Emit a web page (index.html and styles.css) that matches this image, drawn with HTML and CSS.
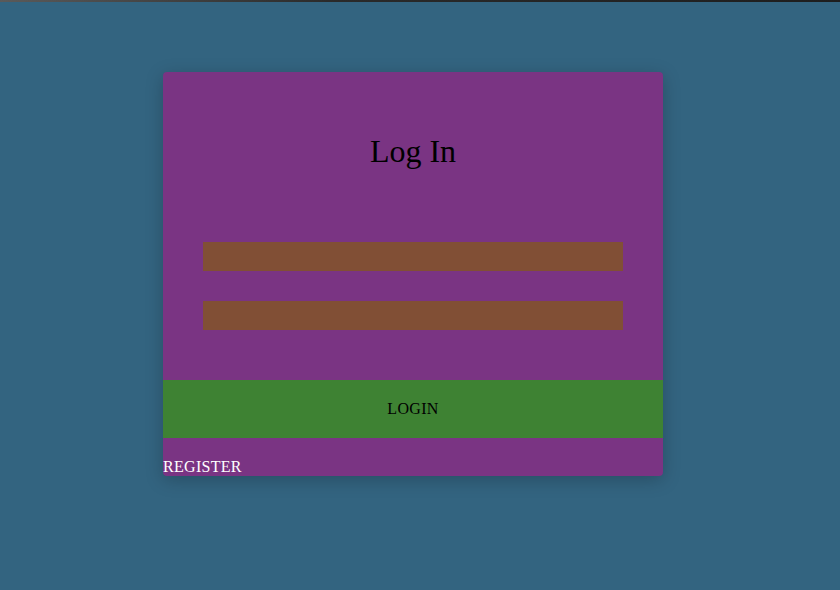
FILE: index.html
```html
<!DOCTYPE html>
<html>
<head>
<meta charset="utf-8">
<link rel="stylesheet" href="styles.css">
</head>
<body>
<div class="topline"></div>
<main class="page">
  <div class="card">
    <h1 class="title">Log In</h1>
    <form class="fields">
      <input class="field" type="text">
      <input class="field" type="password">
    </form>
    <button class="login" type="button">LOGIN</button>
    <a class="register">REGISTER</a>
  </div>
</main>
</body>
</html>
```
FILE: styles.css
```css
html, body {
  margin: 0;
  padding: 0;
  height: 100%;
}
body {
  background: #336480;
  font-family: "Liberation Serif", "Times New Roman", serif;
}
.topline {
  height: 2px;
  background: linear-gradient(to right, #5a5a5a, #2a2a2a 40%, #1e1e1e);
}
.page {
  padding: 70px 0 0 163px;
}
.card {
  width: 500px;
  box-sizing: border-box;
  background: #7a3483;
  border-radius: 4px;
  box-shadow: 0 4px 18px rgba(0, 0, 0, 0.22);
  padding: 61px 0 0;
  display: flex;
  flex-direction: column;
}
.title {
  margin: 0;
  font-size: 32px;
  font-weight: normal;
  line-height: 37px;
  height: 37px;
  text-align: center;
  color: #000;
}
.fields {
  margin: 72px 40px 0;
  display: flex;
  flex-direction: column;
  gap: 30px;
}
.field {
  display: block;
  height: 29px;
  border: 0;
  padding: 0;
  margin: 0;
  background: #814f35;
  width: 100%;
}
.login {
  margin-top: 50px;
  height: 58px;
  border: 0;
  padding: 0;
  background: #3e8233;
  color: #000;
  font-family: "Liberation Serif", "Times New Roman", serif;
  font-size: 16px;
  letter-spacing: 0.3px;
}
.register {
  margin-top: 20px;
  color: #fff;
  font-size: 16px;
  line-height: 18px;
  height: 18px;
  letter-spacing: 0.3px;
}
```
